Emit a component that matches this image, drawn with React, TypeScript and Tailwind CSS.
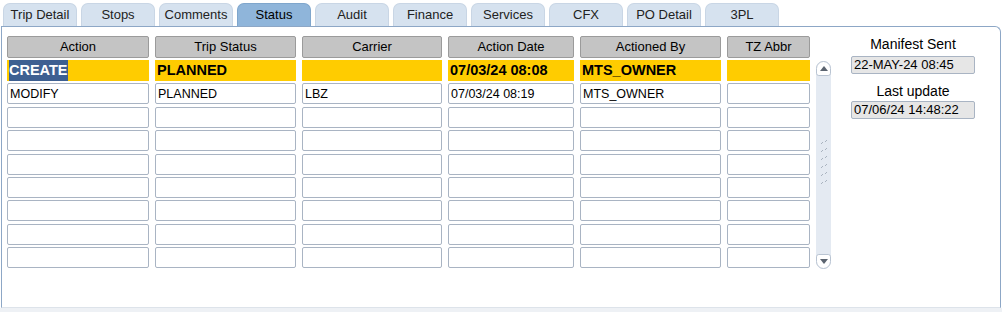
const tabs = [
  "Trip Detail",
  "Stops",
  "Comments",
  "Status",
  "Audit",
  "Finance",
  "Services",
  "CFX",
  "PO Detail",
  "3PL",
];

const columns = [
  { title: "Action", w: "w-[142px]" },
  { title: "Trip Status", w: "w-[141px]" },
  { title: "Carrier", w: "w-[140px]" },
  { title: "Action Date", w: "w-[126px]" },
  { title: "Actioned By", w: "w-[141px]" },
  { title: "TZ Abbr", w: "w-[83px]" },
];

const rows: string[][] = [
  ["CREATE", "PLANNED", "", "07/03/24 08:08", "MTS_OWNER", ""],
  ["MODIFY", "PLANNED", "LBZ", "07/03/24 08:19", "MTS_OWNER", ""],
  ["", "", "", "", "", ""],
  ["", "", "", "", "", ""],
  ["", "", "", "", "", ""],
  ["", "", "", "", "", ""],
  ["", "", "", "", "", ""],
  ["", "", "", "", "", ""],
  ["", "", "", "", "", ""],
];

function ScrollBar() {
  return (
    <div className="mt-[25px] flex h-[208px] w-[15px] flex-col items-center justify-between rounded-[8px] bg-[#e4eaf2]">
      <div className="flex h-[15px] w-[15px] items-center justify-center rounded-t-[8px] rounded-b-[3px] border border-[#b9c4d2] bg-white">
        <svg width="8" height="5" viewBox="0 0 8 5">
          <path d="M0 5 L4 0 L8 5 Z" fill="#5b6470" />
        </svg>
      </div>
      <svg width="8" height="52" viewBox="0 0 8 52">
        {[0, 8, 16, 24, 32, 40].map((y) => (
          <g key={y} fill="#a9b3bf">
            <rect x="1" y={y + 4} width="1" height="1" />
            <rect x="2" y={y + 3} width="1" height="1" />
            <rect x="5" y={y + 2} width="1" height="1" />
            <rect x="6" y={y + 1} width="1" height="1" />
          </g>
        ))}
      </svg>
      <div className="flex h-[15px] w-[15px] items-center justify-center rounded-b-[8px] rounded-t-[3px] border border-[#b9c4d2] bg-white">
        <svg width="8" height="5" viewBox="0 0 8 5">
          <path d="M0 0 L8 0 L4 5 Z" fill="#5b6470" />
        </svg>
      </div>
    </div>
  );
}

export default function App() {
  return (
    <div
      className="flex h-[312px] w-[1002px] flex-col bg-white text-black"
      style={{ fontFamily: '"Liberation Sans", Arial, sans-serif' }}
    >
      {/* Tab strip */}
      <div className="flex gap-[4px] pl-[3px] pt-[3px]">
        {tabs.map((t) => (
          <div
            key={t}
            className={
              t === "Status"
                ? "flex h-[23px] w-[74px] items-center justify-center rounded-t-[7px] border border-b-0 border-[#7fa6cc] bg-[#8fb5da] text-[13px]"
                : "flex h-[23px] w-[74px] items-center justify-center rounded-t-[7px] border border-b-0 border-[#c9d6e5] bg-[#d6e2ef] text-[13px] text-[#222]"
            }
          >
            {t}
          </div>
        ))}
      </div>

      {/* Panel */}
      <div className="mx-[1px] flex h-[282px] gap-[6px] rounded-tr-[6px] border border-[#8da7c6] border-b-[#dde3ea] pl-[5px] pt-[9px]">
        <div className="flex flex-col">
          <div className="flex gap-[6px]">
            {columns.map((c) => (
              <div
                key={c.title}
                className={`${c.w} flex h-[22px] items-center justify-center rounded-[2px] border border-[#9b9b9b] bg-[#c4c4c4] text-[13px]`}
              >
                {c.title}
              </div>
            ))}
          </div>
          <div className="mt-[2px] flex flex-col gap-[2.4px]">
            {rows.map((r, i) => (
              <div key={i} className="flex gap-[6px]">
                {r.map((v, j) =>
                  i === 0 ? (
                    <div
                      key={j}
                      className={`${columns[j].w} flex h-[21px] items-center bg-[#ffcc00] pl-[2px] text-[14.5px] font-bold`}
                    >
                      {j === 0 ? (
                        <span className="bg-[#3e6091] text-white">{v}</span>
                      ) : (
                        v
                      )}
                    </div>
                  ) : (
                    <div
                      key={j}
                      className={`${columns[j].w} flex h-[21px] items-center rounded-[2px] border border-[#a9b4c3] bg-white pl-[2px] pt-[1px] text-[12.5px]`}
                    >
                      {v}
                    </div>
                  )
                )}
              </div>
            ))}
          </div>
        </div>

        <ScrollBar />

        {/* Side info */}
        <div className="ml-[14px] flex w-[124px] flex-col items-center">
          <div className="text-[14px] leading-[17px]">Manifest Sent</div>
          <div className="mt-[3px] flex h-[18px] w-[124px] items-center rounded-[2px] border border-[#a9b4c3] bg-[#e6e6e6] pl-[2px] text-[13px]">
            22-MAY-24 08:45
          </div>
          <div className="mt-[9px] text-[14px] leading-[17px]">Last update</div>
          <div className="mt-[1px] flex h-[18px] w-[124px] items-center rounded-[2px] border border-[#a9b4c3] bg-[#e6e6e6] pl-[2px] text-[13px]">
            07/06/24 14:48:22
          </div>
        </div>
      </div>
      <div className="flex-1 bg-[#eef1f5]" />
    </div>
  );
}
